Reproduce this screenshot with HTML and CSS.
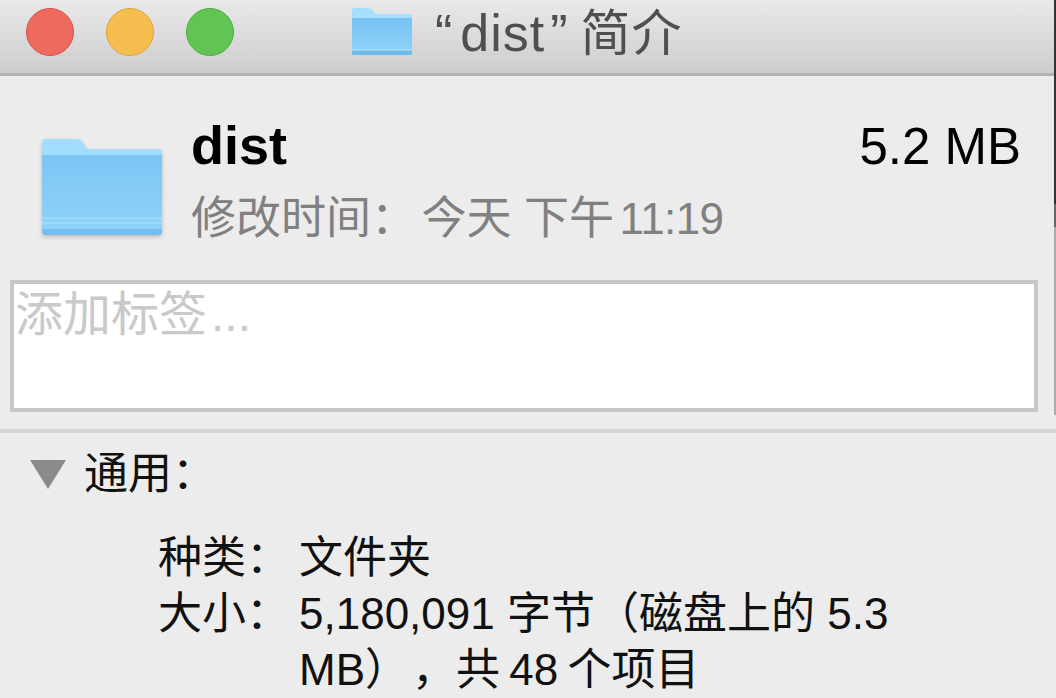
FILE: index.html
```html
<!DOCTYPE html>
<html lang="zh-CN">
<head>
    <meta charset="UTF-8">
    <meta name="viewport" content="width=device-width, initial-scale=1.0">
    <title>“dist”简介</title>
    <link rel="stylesheet" href="styles.css">
</head>
<body>
    <header class="titlebar">
        <div class="lights">
            <span class="light red"></span>
            <span class="light yellow"></span>
            <span class="light green"></span>
        </div>
        <div class="window-title">
            <svg class="folder-small" viewBox="0 0 60 48">
                <defs>
                    <linearGradient id="smallFill" x1="0" y1="0" x2="0" y2="1">
                        <stop offset="0" stop-color="#78c3f3"/>
                        <stop offset="1" stop-color="#90d3fb"/>
                    </linearGradient>
                </defs>
                <path d="M0 3q0-3 3-3h13q3 0 5 3l3 3h34q2 0 2 2v37q0 2-2 2H2q-2 0-2-2z" fill="#a6defd"/>
                <path d="M0 10h60v35q0 2-2 2H2q-2 0-2-2z" fill="url(#smallFill)"/>
                <path d="M0 41h60v1H0z" fill="#a6defd"/>
                <path d="M0 43h60v2q0 2-2 2H2q-2 0-2-2z" fill="#6fb8e8"/>
            </svg>
            <span class="title-text"><span class="title-latin"><span class="open-quote">“</span>dist<span class="close-quote">”</span></span>简介</span>
        </div>
    </header>

    <main>
        <section class="summary">
            <svg class="folder-big" viewBox="0 0 120 96">
                <defs>
                    <linearGradient id="bigFill" x1="0" y1="0" x2="0" y2="1">
                        <stop offset="0" stop-color="#7cc5f4"/>
                        <stop offset="1" stop-color="#90d3fb"/>
                    </linearGradient>
                </defs>
                <path d="M0 4q0-4 4-4h31q4 0 6 4l4 6h71q4 0 4 4v78q0 4-4 4H4q-4 0-4-4z" fill="#a2dcfe"/>
                <path d="M0 16h120v76q0 4-4 4H4q-4 0-4-4z" fill="url(#bigFill)"/>
                <path d="M0 78h120v2H0zM0 83h120v2H0z" fill="#9fd9fb"/>
                <path d="M0 90h120v2q0 4-4 4H4q-4 0-4-4z" fill="#76bdeb"/>
            </svg>
            <div class="summary-text">
                <div class="name-row">
                    <span class="name">dist</span>
                    <span class="size">5.2 MB</span>
                </div>
                <div class="modified">修改时间： <span class="day">今天 下午</span> <span class="clock">11:19</span></div>
            </div>
        </section>

        <div class="tags">添加标签<span class="dots">...</span></div>

        <section class="general">
            <div class="general-head">
                <span class="triangle"></span>
                <span>通用：</span>
            </div>
            <dl class="info">
                <dt>种类：</dt>
                <dd>文件夹</dd>
                <dt>大小：</dt>
                <dd>
                    <div>5,180,091 字节（磁盘上的 5.3</div>
                    <div>MB）<span class="comma">，</span><span class="count">共 48 个项目</span></div>
                </dd>
            </dl>
        </section>
    </main>

    <div class="window-edge"></div>
</body>
</html>
```

FILE: styles.css
```css
html, body {
    margin: 0;
    height: 100%;
    overflow: hidden;
}

body {
    position: relative;
    width: 1056px;
    height: 698px;
    background-color: #ececec;
    font-family: "Liberation Sans", "Noto Sans CJK SC", sans-serif;
    color: #111;
}

.titlebar {
    display: flex;
    align-items: flex-start;
    box-sizing: border-box;
    height: 76px;
    padding: 8px 0 0 26px;
    background: linear-gradient(#e9e9e9, #cdcdcd);
    border-bottom: 3px solid #b1b1b1;
}

.lights {
    display: flex;
    gap: 32px;
}

.light {
    width: 48px;
    height: 48px;
    border-radius: 50%;
    box-sizing: border-box;
    border: 1px solid;
}

.red {
    background-color: #ee6a5f;
    border-color: #d5544a;
}

.yellow {
    background-color: #f6be4f;
    border-color: #dea23a;
}

.green {
    background-color: #61c554;
    border-color: #4eab41;
}

.window-title {
    display: flex;
    gap: 23px;
    margin-left: 118px;
    color: #4f4f4f;
}

.folder-small {
    width: 60px;
    height: 48px;
}

.title-text {
    font-size: 50px;
    line-height: 50px;
    letter-spacing: 1px;
}

.title-latin {
    font-size: 52px;
    margin-right: 12px;
}

.open-quote {
    margin-right: 7px;
}

.close-quote {
    margin-left: 5px;
}

.summary {
    display: flex;
    padding: 63px 35px 0 42px;
}

.folder-big {
    width: 120px;
    height: 96px;
    filter: drop-shadow(0 2px 2px rgba(0, 0, 0, 0.2));
}

.summary-text {
    flex: 1;
    margin-left: 29px;
    margin-top: -22px;
}

.name-row {
    display: flex;
    justify-content: space-between;
    align-items: baseline;
    height: 56px;
    line-height: 56px;
}

.name {
    font-size: 54px;
    font-weight: bold;
    color: #000;
}

.size {
    font-size: 51px;
    color: #000;
}

.modified {
    height: 56px;
    margin-top: 18px;
    font-size: 45px;
    line-height: 56px;
    color: #808080;
}

.day {
    margin-left: -7px;
}

.clock {
    margin-left: -7px;
    font-size: 44px;
    letter-spacing: -0.6px;
}

.tags {
    height: 124px;
    margin: 33px 18px 0 10px;
    padding-left: 1px;
    background-color: #fff;
    border: 4px solid #c6c6c6;
    font-size: 48px;
    line-height: 62px;
    color: #c9c9c9;
}

.dots {
    margin-left: 4px;
}

.general {
    margin-top: 17px;
    border-top: 4px solid #d6d6d6;
    padding: 13px 0 0 30px;
}

.general-head {
    display: flex;
    align-items: center;
    gap: 18px;
    font-size: 44px;
    line-height: 56px;
}

.triangle {
    width: 0;
    height: 0;
    border-left: 18px solid transparent;
    border-right: 18px solid transparent;
    border-top: 29px solid #8b8b8b;
}

.info {
    display: grid;
    grid-template-columns: 141px 600px;
    margin: 28px 0 0 128px;
    font-size: 44px;
    line-height: 56px;
}

.info dt, .info dd {
    margin: 0;
}

.comma {
    margin-left: 25px;
}

.count {
    word-spacing: -3px;
}

/* sliver of the neighbouring window along the right edge */
.window-edge {
    position: absolute;
    top: 0;
    right: 0;
    width: 2px;
    height: 415px;
    background: linear-gradient(#333 0, #333 204px, #666 204px, #666 227px, #aaa 227px);
}
```
